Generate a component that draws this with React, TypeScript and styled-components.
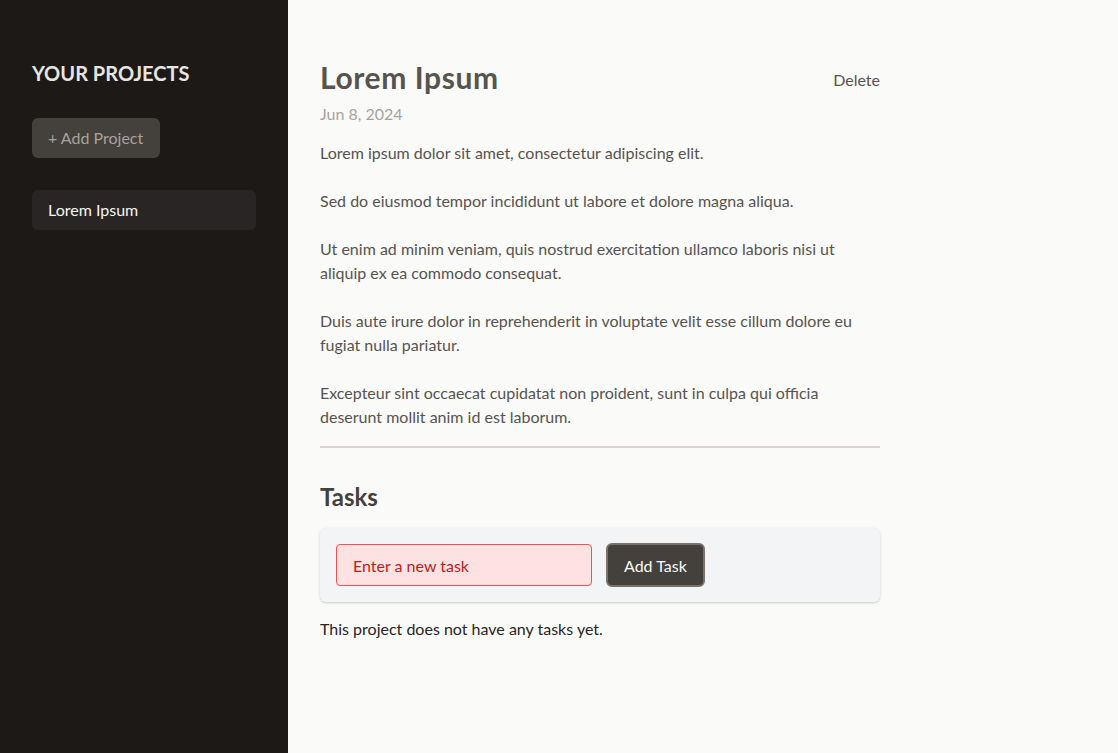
import React from "react";
import styled, { createGlobalStyle } from "styled-components";

const GlobalStyle = createGlobalStyle`
  * { box-sizing: border-box; }
  html, body { margin: 0; padding: 0; }
  body {
    font-family: Lato, "Open Sans", sans-serif;
    background: #fafaf9;
    -webkit-font-smoothing: antialiased;
  }
`;

const Layout = styled.main`
  display: flex;
  gap: 32px;
  height: 753px;
  background: #fafaf9;
`;

const Sidebar = styled.aside`
  width: 288px;
  flex-shrink: 0;
  background: #1c1917;
  color: #fafaf9;
  padding: 59px 32px 0;
  display: flex;
  flex-direction: column;
  align-items: flex-start;
`;

const SidebarTitle = styled.h2`
  margin: 0 0 31px;
  font-size: 20px;
  line-height: 28px;
  font-weight: 700;
  text-transform: uppercase;
  color: #e7e5e4;
`;

const AddProjectButton = styled.button`
  font-family: inherit;
  font-size: 16px;
  line-height: 24px;
  height: 40px;
  padding: 8px 17px 8px 16px;
  border: none;
  border-radius: 6px;
  background: #44403c;
  color: #a8a29e;
  cursor: pointer;
`;

const ProjectList = styled.ul`
  list-style: none;
  margin: 32px 0 0;
  padding: 0;
  width: 100%;
`;

const ProjectItem = styled.button<{ $active?: boolean }>`
  display: block;
  width: 100%;
  height: 40px;
  text-align: left;
  font-family: inherit;
  font-size: 16px;
  line-height: 24px;
  padding: 8px 16px;
  border: none;
  border-radius: 6px;
  background: ${(p) => (p.$active ? "#292524" : "transparent")};
  color: ${(p) => (p.$active ? "#f5f5f4" : "#a8a29e")};
  cursor: pointer;
`;

const Content = styled.section`
  width: 560px;
  padding-top: 59px;
`;

const Header = styled.header`
  padding-bottom: 17px;
  margin-bottom: 16px;
  border-bottom: 2px solid #d6d3d1;
`;

const TitleRow = styled.div`
  display: flex;
  align-items: center;
  justify-content: space-between;
`;

const Title = styled.h1`
  margin: 0 0 7px;
  font-size: 30px;
  line-height: 36px;
  font-weight: 700;
  letter-spacing: 0.6px;
  color: #57534e;
`;

const DeleteButton = styled.button`
  background: none;
  border: none;
  padding: 0;
  font-family: inherit;
  font-size: 16px;
  line-height: 24px;
  color: #57534e;
  cursor: pointer;
  margin-bottom: 2px;
`;

const DateText = styled.p`
  margin: 0 0 15px;
  font-size: 16px;
  line-height: 24px;
  color: #a8a29e;
`;

const Description = styled.p`
  margin: 0;
  font-size: 16px;
  line-height: 24px;
  color: #57534e;
  white-space: pre-wrap;
`;

const TasksTitle = styled.h2`
  margin: 33px 0 15px;
  font-size: 24px;
  line-height: 32px;
  font-weight: 700;
  color: #44403c;
`;

const TaskCard = styled.div`
  display: flex;
  align-items: center;
  gap: 14px;
  padding: 15px 16px;
  background: #f3f4f6;
  border-radius: 6px;
  box-shadow: 0 1px 3px rgba(0, 0, 0, 0.12), 0 1px 2px rgba(0, 0, 0, 0.08);
`;

const TaskInput = styled.input`
  width: 256px;
  height: 42px;
  padding: 0 16px;
  font-family: inherit;
  font-size: 16px;
  border: 1px solid #f05252;
  border-radius: 4px;
  background: #fee2e2;
  color: #b91c1c;
  outline: none;
  &::placeholder {
    color: #b91c1c;
  }
`;

const AddTaskButton = styled.button`
  height: 44px;
  padding: 0 16px;
  font-family: inherit;
  font-size: 16px;
  border: 2px solid #78716c;
  border-radius: 6px;
  background: #44403c;
  color: #fafaf9;
  cursor: pointer;
`;

const EmptyText = styled.p`
  margin: 15px 0 0;
  font-size: 16px;
  line-height: 24px;
  color: #292524;
`;

const description = `Lorem ipsum dolor sit amet, consectetur adipiscing elit.

Sed do eiusmod tempor incididunt ut labore et dolore magna aliqua.

Ut enim ad minim veniam, quis nostrud exercitation ullamco laboris nisi ut aliquip ex ea commodo consequat.

Duis aute irure dolor in reprehenderit in voluptate velit esse cillum dolore eu fugiat nulla pariatur.

Excepteur sint occaecat cupidatat non proident, sunt in culpa qui officia deserunt mollit anim id est laborum.`;

export default function App() {
  return (
    <>
      <GlobalStyle />
      <Layout>
        <Sidebar>
          <SidebarTitle>Your Projects</SidebarTitle>
          <AddProjectButton>+ Add Project</AddProjectButton>
          <ProjectList>
            <li>
              <ProjectItem $active>Lorem Ipsum</ProjectItem>
            </li>
          </ProjectList>
        </Sidebar>
        <Content>
          <Header>
            <TitleRow>
              <Title>Lorem Ipsum</Title>
              <DeleteButton>Delete</DeleteButton>
            </TitleRow>
            <DateText>Jun 8, 2024</DateText>
            <Description>{description}</Description>
          </Header>
          <TasksTitle>Tasks</TasksTitle>
          <TaskCard>
            <TaskInput placeholder="Enter a new task" />
            <AddTaskButton>Add Task</AddTaskButton>
          </TaskCard>
          <EmptyText>This project does not have any tasks yet.</EmptyText>
        </Content>
      </Layout>
    </>
  );
}
